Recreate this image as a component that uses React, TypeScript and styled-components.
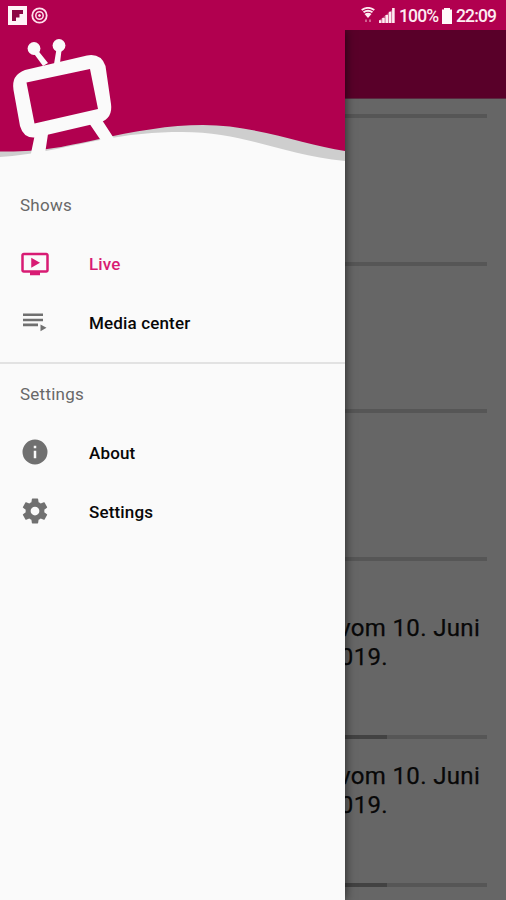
import React from 'react';
import styled, { createGlobalStyle } from 'styled-components';

const GlobalStyle = createGlobalStyle`
  * { box-sizing: border-box; }
  body { margin: 0; background: #666; font-family: Roboto, "Liberation Sans", sans-serif; }
`;

const Screen = styled.div`
  display: flex;
  flex-direction: column;
  width: 506px;
  height: 900px;
  overflow: hidden;
  background: #b1004f;
`;

const StatusBar = styled.header`
  display: flex;
  align-items: center;
  flex: none;
  height: 30px;
  padding: 1px 9px 0 8px;
  color: #fdebf1;
`;

const StatusGroup = styled.div<{ $end?: boolean }>`
  display: flex;
  align-items: center;
  gap: 4px;
  margin-left: ${(p) => (p.$end ? 'auto' : '0')};
`;

const StatusText = styled.span<{ $width: number }>`
  width: ${(p) => p.$width}px;
  padding-top: 1px;
  font-size: 17.5px;
  font-weight: 500;
  line-height: 20px;
  letter-spacing: -0.85px;
  white-space: nowrap;
`;

const Body = styled.main`
  position: relative;
  flex: 1;
  min-height: 0;
`;

const Page = styled.div`
  height: 100%;
  background: #666;
  overflow: hidden;
`;

const Toolbar = styled.div`
  height: 69px;
  background: #590029;
  border-bottom: 1px solid #592940;
`;

const Show = styled.section<{ $height: number }>`
  display: flex;
  flex-direction: column;
  justify-content: flex-end;
  height: ${(p) => p.$height}px;
  padding: 0 19px 0 18px;
`;

const ShowTitle = styled.h2`
  flex: none;
  height: 121px;
  margin: 0;
  padding-left: 308px;
  color: #080808;
  font-size: 24px;
  font-weight: 400;
  line-height: 29px;
  letter-spacing: 0.35px;
  -webkit-text-stroke: 0.25px #080808;
  white-space: nowrap;
`;

const TitleLine = styled.span<{ $indent: number }>`
  display: block;
  padding-left: ${(p) => p.$indent}px;
`;

const Track = styled.div`
  flex: none;
  height: 4px;
  margin-bottom: 1px;
  background: #565656;
`;

const Progress = styled.div<{ $value: number }>`
  width: ${(p) => p.$value}%;
  height: 100%;
  background: #424242;
`;

const Drawer = styled.aside`
  position: absolute;
  inset: 0 auto 0 0;
  width: 345px;
  background: #fafafa;
  box-shadow: 1px 0 9px rgba(0, 0, 0, 0.55);
  clip-path: inset(0 -16px 0 0);
`;

const Banner = styled.svg`
  display: block;
  width: 345px;
  height: 134px;
`;

const Group = styled.section<{ $divided?: boolean }>`
  padding-top: ${(p) => (p.$divided ? 0 : 11)}px;
  border-top: ${(p) => (p.$divided ? '2px solid #e2e2e2' : '0')};
  height: ${(p) => (p.$divided ? 'auto' : '198px')};
`;

const GroupTitle = styled.h3`
  height: 59px;
  margin: 0;
  padding-left: 20px;
  color: #686868;
  font-size: 17px;
  font-weight: 400;
  line-height: 60px;
  letter-spacing: 0.25px;
`;

const Item = styled.a<{ $active?: boolean }>`
  display: flex;
  align-items: center;
  height: 59px;
  padding-left: 20px;
  color: ${(p) => (p.$active ? '#d81b73' : '#080808')};
  font-size: 17px;
  font-weight: 500;
  letter-spacing: 0.15px;

  svg {
    flex: none;
    width: 30px;
    height: 30px;
    margin: 0 39px ${(p) => (p.$active ? 0 : 1)}px 0;
    fill: ${(p) => (p.$active ? '#d81b73' : '#707070')};
  }
`;

const FlipIcon = () => (
  <svg width="19" height="19" viewBox="0 0 19 19">
    <rect width="19" height="19" fill="#fff4f8" />
    <path d="M4 4h11v4h-3.5v3.5H8V15H4z" fill="#8c0644" />
  </svg>
);

const TargetIcon = () => (
  <svg width="17" height="17" viewBox="0 0 17 17" fill="none" stroke="#ffe1ec">
    <circle cx="8.5" cy="8.5" r="7.2" strokeWidth="1.8" />
    <circle cx="8.5" cy="8.5" r="3.7" strokeWidth="1.5" />
    <circle cx="8.5" cy="8.5" r="1" fill="#ffe1ec" />
  </svg>
);

const WifiIcon = () => (
  <svg width="14" height="17" viewBox="0 0 14 17" fill="none" stroke="#fdebf1">
    <path d="M.7 3Q7-1.2 13.3 3M2.5 5.2Q7 2.2 11.5 5.2" strokeWidth="1.9" />
    <path d="M3.5 6.9Q7 4.6 10.5 6.9L7 11z" fill="#fdebf1" stroke="none" />
    <path d="M5 12.5v2.5M9 12.5v2.5" strokeWidth="1.5" opacity=".55" />
  </svg>
);

const SignalIcon = () => (
  <svg width="16" height="15" viewBox="0 0 16 15" fill="#fdebf1">
    <path d="M0 15V12.5L15.5 0V15z" opacity=".35" />
    <path d="M0 12.3h2.4V15H0zM3.2 10h2.5v5H3.2zM6.5 7h2.5v8H6.500zM9.8 3.8h2.5V15H9.8zM13.1 0h2.5v15h-2.5z" />
  </svg>
);

const BatteryIcon = () => (
  <svg width="10" height="16" viewBox="0 0 10 16" fill="#fff8fa">
    <path d="M2 0h6v1.500h2V16H0V1.500h2z" />
  </svg>
);

const LiveIcon = () => (
  <svg viewBox="0 0 24 24">
    <path d="M21 3H3c-1.1 0-2 .9-2 2v12c0 1.1.9 2 2 2h5v2h8v-2h5c1.1 0 2-.9 2-2V5c0-1.1-.9-2-2-2zm0 14H3V5h18v12zm-5-6-7 4V7z" />
  </svg>
);

const MediaIcon = () => (
  <svg viewBox="0 0 30 30">
    <path d="M3 6.500h20v2.6H3zM3 11.7h20v2.6H3zM3 16.600h15v2.6H3zM20.5 17.500l6 3.3-6 3.4z" />
  </svg>
);

const InfoIcon = () => (
  <svg viewBox="0 0 24 24">
    <path d="M12 2a10 10 0 1 0 0 20 10 10 0 0 0 0-20zm1 15h-2v-6h2v6zm0-8h-2V7h2v2z" />
  </svg>
);

const GearIcon = () => (
  <svg viewBox="0 0 24 24">
    <path d="M19.43 12.98c.04-.32.07-.64.07-.98s-.03-.66-.07-.98l2.11-1.65c.19-.15.24-.42.12-.64l-2-3.46c-.12-.22-.39-.3-.61-.22l-2.49 1c-.52-.4-1.08-.73-1.69-.98l-.38-2.65C14.46 2.18 14.25 2 14 2h-4c-.25 0-.46.18-.49.42l-.38 2.65c-.61.25-1.17.59-1.69.98l-2.49-1c-.23-.09-.49 0-.61.22l-2 3.46c-.13.22-.07.49.12.64l2.11 1.65c-.04.32-.07.65-.07.98s.03.66.07.98l-2.11 1.65c-.19.15-.24.42-.12.64l2 3.46c.12.22.39.3.61.22l2.49-1c.52.4 1.08.73 1.69.98l.38 2.65c.03.24.24.42.49.42h4c.25 0 .46-.18.49-.42l.38-2.65c.61-.25 1.17-.59 1.69-.98l2.49 1c.23.09.49 0 .61-.22l2-3.46c.12-.22.07-.49-.12-.64l-2.11-1.65zM12 15.5a3.5 3.5 0 1 1 0-7 3.5 3.5 0 0 1 0 7z" />
  </svg>
);

const DrawerBanner = () => (
  <Banner viewBox="0 30 345 134">
    <path d="M0 30H345V164H0z" fill="#b1004f" />
    <path d="M0 151.5C40 151.5 50 149.5 95 140C135 131 170 125 203 125C255 125 305 145 345 151V164H0z" fill="#cecece" />
    <path d="M0 157C35 154.5 55 149 95 141C130 134 155 132 182 132C245 132 282 155 345 161V164H0z" fill="#fafafa" />
    <g fill="#fafafa">
      <circle cx="34" cy="48.5" r="6.4" />
      <circle cx="59" cy="45.5" r="6.4" />
      <path d="M36 48L48 63L43 66L32 51zM57 46h5L60 63L54 64z" />
      <path
        fillRule="evenodd"
        d="M25 70L87 55.5Q101 53 105.500 66L111 104Q113 118 100 122.500L38 137Q24 140 20 126L13.500 90Q11 75 25 70zM26.500 82.500L34.500 123.500L98 109L90 69z"
      />
      <path d="M35 134H48L45 154L30 158zM89 123L102 120L115 140L104 145z" />
    </g>
  </Banner>
);

const emptyShows = [20, 148, 147, 148];
const titledShows = [178, 148];

export default function App() {
  return (
    <Screen>
      <GlobalStyle />
      <StatusBar>
        <StatusGroup>
          <FlipIcon />
          <TargetIcon />
        </StatusGroup>
        <StatusGroup $end>
          <WifiIcon />
          <SignalIcon />
          <StatusText $width={39}>100%</StatusText>
          <BatteryIcon />
          <StatusText $width={41}>22:09</StatusText>
        </StatusGroup>
      </StatusBar>
      <Body>
        <Page>
          <Toolbar />
          {emptyShows.map((height, i) => (
            <Show key={i} $height={height}>
              <Track />
            </Show>
          ))}
          {titledShows.map((height) => (
            <Show key={height} $height={height}>
              <ShowTitle>
                <TitleLine $indent={13}>vom 10. Juni</TitleLine>
                <TitleLine $indent={0}>2019.</TitleLine>
              </ShowTitle>
              <Track>
                <Progress $value={78.7} />
              </Track>
            </Show>
          ))}
        </Page>
        <Drawer>
          <DrawerBanner />
          <Group>
            <GroupTitle>Shows</GroupTitle>
            <Item $active><LiveIcon />Live</Item>
            <Item><MediaIcon />Media center</Item>
          </Group>
          <Group $divided>
            <GroupTitle>Settings</GroupTitle>
            <Item><InfoIcon />About</Item>
            <Item><GearIcon />Settings</Item>
          </Group>
        </Drawer>
      </Body>
    </Screen>
  );
}
